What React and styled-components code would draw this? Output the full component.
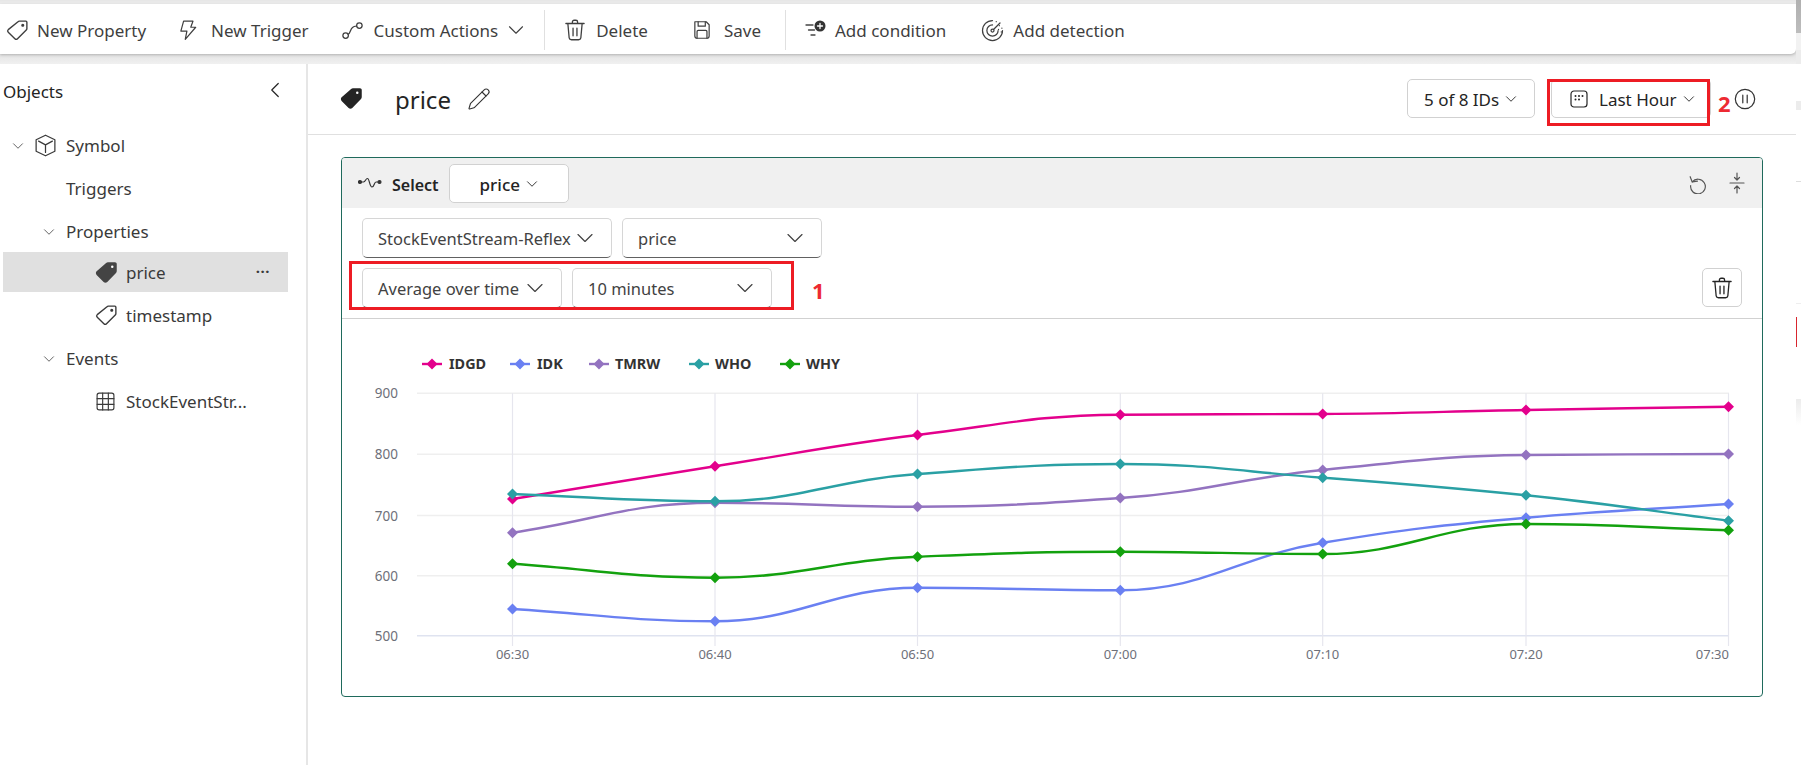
import React from "react";
import styled, { createGlobalStyle } from "styled-components";
import { ChevronDown, ChevronLeft, Pencil } from "lucide-react";

const FONT = `"Noto Sans", "Open Sans", sans-serif`;

const Global = createGlobalStyle`
  html, body { margin: 0; padding: 0; background: #fff; }
  body { font-family: ${FONT}; color: #242424; overflow: hidden; }
  * { box-sizing: border-box; }
`;

const Page = styled.div`
  width: 1801px;
  height: 765px;
  display: grid;
  grid-template-columns: 1796px 5px;
  background: #fff;
`;
const LeftColumn = styled.div`
  display: grid;
  grid-template-rows: 64px 1fr;
  min-height: 0;
`;
const RightStrip = styled.div`
  display: flex;
  flex-direction: column;
`;
const StripPart = styled.div`
  height: ${(p) => p.$h}px;
  background: ${(p) => p.$bg ?? "#fff"};
  border-left: ${(p) => (p.$red ? "1.5px solid #d8262e" : "none")};
`;
const TopBand = styled.div`
  background: linear-gradient(#e6e6e6 0, #eeeeee 4px, #e4e4e4 54px, #f0f0f0 64px);
  padding: 4px 0 10px 0;
  display: flex;
`;
const Toolbar = styled.div`
  flex: 1;
  background: #fff;
  border-radius: 0 0 5px 0;
  box-shadow: 0 1px 3px rgba(0, 0, 0, 0.22);
  display: flex;
  align-items: center;
  padding: 2px 0 0 5px;
  font-size: 17px;
  color: #3f3f3f;
`;
const ToolItem = styled.div`
  display: flex;
  align-items: center;
  gap: ${(p) => p.$gap ?? 9}px;
  margin-right: ${(p) => p.$mr ?? 0}px;
  white-space: nowrap;
`;
const ToolDivider = styled.div`
  width: 1px;
  height: 40px;
  background: #e0e0e0;
  margin-right: ${(p) => p.$mr}px;
`;
const Chevron = styled(ChevronDown)`
  flex: none;
  margin-left: ${(p) => p.$ml ?? 0}px;
`;
const Body = styled.div`
  display: grid;
  grid-template-columns: 308px 1fr;
  min-height: 0;
`;
const Sidebar = styled.aside`
  border-right: 2px solid #e6e6e6;
  padding: 16px 0 0 3px;
  font-size: 17px;
  color: #3a3a3a;
`;
const SideTop = styled.div`
  display: flex;
  justify-content: space-between;
  height: 44px;
  padding-right: 20px;
  align-items: flex-start;
`;
const SideTitle = styled.div`
  font-size: 17px;
  line-height: 24px;
  color: #242424;
`;
const Collapse = styled.div`
  color: #242424;
  margin-top: -3px;
  width: 24px;
  height: 26px;
`;
const TreeRow = styled.div`
  display: flex;
  align-items: center;
  height: ${(p) => p.$h ?? 43}px;
  width: 285px;
  padding-left: ${(p) => p.$indent}px;
  background: ${(p) => (p.$selected ? "#e0e0e0" : "transparent")};
  margin: ${(p) => (p.$selected ? "-1px 0 2px" : "0")};
  white-space: nowrap;
`;
const TreeChevron = styled.span`
  display: inline-flex;
  width: ${(p) => p.$w}px;
  color: #555;
`;
const TreeIcon = styled.span`
  display: inline-flex;
  width: ${(p) => p.$w}px;
`;
const TreeLabel = styled.span`
  flex: 1;
`;
const RowDots = styled.span`
  margin-right: 18px;
  font-size: 15px;
  font-weight: 700;
  letter-spacing: 0.5px;
  line-height: 1;
  margin-top: -2px;
`;
const Main = styled.main`
  display: flex;
  flex-direction: column;
  min-width: 0;
`;
const Header = styled.header`
  height: 71px;
  border-bottom: 1px solid #e0e0e0;
  display: flex;
  align-items: center;
  padding: 0 0 1px 31px;
`;
const HeaderTitle = styled.h1`
  font-weight: 400;
  font-size: 24px;
  margin: 2px 16px 0 31px;
  color: #242424;
`;
const Spacer = styled.div`
  flex: 1;
`;
const HeaderButton = styled.div`
  height: 39px;
  width: ${(p) => p.$w}px;
  margin-left: ${(p) => p.$ml ?? 0}px;
  border: 1px solid #d1d1d1;
  border-radius: 5px;
  display: flex;
  align-items: center;
  padding-left: ${(p) => p.$pl}px;
  padding-top: 1px;
  font-size: 17px;
  color: #242424;
  gap: ${(p) => p.$gap}px;
  white-space: nowrap;
`;
const Annotated = styled.div`
  position: relative;
  display: flex;
  align-items: center;
`;
const RedBox = styled.div`
  position: absolute;
  left: ${(p) => p.$l}px;
  top: ${(p) => p.$t}px;
  width: ${(p) => p.$w}px;
  height: ${(p) => p.$h}px;
  border: 3.5px solid #ed1c24;
  pointer-events: none;
`;
const RedNum = styled.span`
  position: absolute;
  left: ${(p) => p.$l}px;
  top: ${(p) => p.$t}px;
  color: #ed2a32;
  font-weight: 700;
  font-size: 22px;
  line-height: 24px;
`;
const PauseWrap = styled.div`
  display: flex;
  margin: 0 40px 0 23px;
  color: #333;
`;
const Content = styled.div`
  padding: 22px 33px 0 33px;
`;
const Card = styled.section`
  height: 540px;
  border: 1px solid #1f6a5c;
  border-radius: 4px;
  overflow: hidden;
  position: relative;
`;
const CardHeader = styled.div`
  height: 50px;
  background: #f0f0f0;
  display: flex;
  align-items: center;
  padding: 0 0 0 16px;
`;
const SelectLabel = styled.span`
  font-weight: 600;
  font-size: 16px;
  margin: 3px 10px 0 10px;
`;
const PriceButton = styled.div`
  width: 120px;
  height: 39px;
  background: #fff;
  border: 1px solid #d1d1d1;
  border-radius: 5px;
  display: flex;
  align-items: center;
  padding-left: 30px;
  padding-top: 2px;
  gap: 3px;
  font-size: 17px;
  font-weight: 500;
`;
const HeaderTools = styled.div`
  margin-left: auto;
  display: flex;
  gap: 21px;
  padding-right: 17px;
  align-items: center;
  color: #555;
`;
const Filters = styled.div`
  height: 111px;
  border-bottom: 1px solid #d1d1d1;
  padding: 10px 0 0 20px;
  position: relative;
`;
const FilterRow = styled.div`
  display: flex;
  gap: 10px;
  margin-bottom: 10px;
`;
const Dropdown = styled.div`
  width: ${(p) => p.$w}px;
  height: 40px;
  background: #fff;
  border: 1px solid #d6d6d6;
  border-bottom-color: #616161;
  border-radius: 5px;
  display: flex;
  align-items: center;
  justify-content: space-between;
  padding: 0 12px 0 ${(p) => p.$pl ?? 15}px;
  font-size: 16.5px;
  color: #424242;
  white-space: nowrap;
`;
const TrashButton = styled.div`
  position: absolute;
  right: 20px;
  top: 60px;
  width: 40px;
  height: 39px;
  border: 1px solid #d1d1d1;
  border-radius: 5px;
  display: flex;
  align-items: center;
  justify-content: center;
`;
const ChartWrap = styled.div`
  display: block;
`;

const Stroke = ({ s = 20, children, w = 1.1, vb = 20 }) => (
  <svg width={s} height={s} viewBox={`0 0 ${vb} ${vb}`} fill="none" stroke="currentColor" strokeWidth={w} strokeLinecap="round" strokeLinejoin="round" style={{ flex: "none" }}>
    {children}
  </svg>
);

const TagOutline = ({ s = 25 }) => (
  <Stroke s={s}>
    <path d="M11.5 2.5h5.2a.8.8 0 0 1 .8.8v5.2a1.6 1.6 0 0 1-.5 1.1l-7 7a1.5 1.5 0 0 1-2.1 0L2.6 11.4a1.5 1.5 0 0 1 0-2.1l7.8-6.3a1.6 1.6 0 0 1 1.1-.5Z" />
    <circle cx="14.2" cy="5.8" r=".7" fill="currentColor" />
  </Stroke>
);
const TagFilled = ({ s = 25, color = "#242424" }) => (
  <svg width={s} height={s} viewBox="0 0 20 20" style={{ flex: "none" }}>
    <path fill={color} d="M11.2 1.8h5.6c.8 0 1.4.6 1.4 1.4v5.6c0 .6-.2 1.1-.6 1.5l-7 7.2c-.8.8-2.1.8-2.9 0l-5.6-5.6c-.8-.8-.8-2.1 0-2.9l7.6-6.6c.4-.4.9-.6 1.5-.6Z" />
    <circle cx="14.6" cy="5.4" r="1" fill="#fff" />
  </svg>
);
const Bolt = () => (
  <Stroke s={22}><path d="M6 2h8.5l-2 5.5H17L7.5 18.5l1.5-7.5H3.5L6 2Z" /></Stroke>
);
const Nodes = () => (
  <Stroke s={25} w={1}><circle cx="4.5" cy="14" r="2.2" /><circle cx="15.5" cy="6" r="2.2" /><path d="M6.5 13c2-.6 1.5-4 3.5-5.5.8-.6 2-.9 3.3-1.1" /></Stroke>
);
const Trash = ({ s = 26 }) => (
  <Stroke s={s} w={1}>
    <path d="M3 5h14M8 5V3.8A1.3 1.3 0 0 1 9.3 2.5h1.4A1.3 1.3 0 0 1 12 3.8V5M4.5 5l1 11a1.8 1.8 0 0 0 1.8 1.5h5.4a1.8 1.8 0 0 0 1.8-1.5l1-11M8.5 8.5v6M11.5 8.5v6" />
  </Stroke>
);
const Save = () => (
  <Stroke s={22}>
    <path d="M3.5 2.5h10.3l2.7 2.7v10.3a2 2 0 0 1-2 2h-9a2 2 0 0 1-2-2Z" />
    <path d="M6.5 2.5v4h6.5v-4M5.5 17.5v-6.2a1 1 0 0 1 1-1h7a1 1 0 0 1 1 1v6.2" />
  </Stroke>
);
const Condition = () => (
  <svg width="22" height="20" viewBox="0 0 22 20" fill="none" stroke="#444" strokeWidth="1.3" strokeLinecap="round" style={{ flex: "none" }}>
    <path d="M1 5h7M3.5 10h6M6 15h4" />
    <circle cx="15" cy="6" r="5.5" fill="#333" stroke="none" />
    <path d="M15 3.5v5M12.5 6h5" stroke="#fff" />
  </svg>
);
const Detection = () => (
  <Stroke s={25} w={1}>
    <path d="M10 2a8 8 0 1 0 8 8" />
    <path d="M10 5.5a4.5 4.5 0 1 0 4.5 4.5" />
    <circle cx="10" cy="10" r="1.2" />
    <path d="M11 9l5-5" />
    <path d="M13 2.8v.1M15.5 6v.1M17.5 8v.1M14.8 9v.1M17 11v.1" strokeDasharray="1 1" />
  </Stroke>
);
const Cube = () => (
  <Stroke s={25} w={1}>
    <path d="M10 1.8 17.5 5.4v9.2L10 18.2 2.5 14.6V5.4Z" />
    <path d="M4.5 6.5 10 9.5l5.5-3M10 9.5v6" />
  </Stroke>
);
const TableIcon = () => (
  <Stroke s={21}>
    <rect x="2" y="2" width="16" height="16" rx="2" />
    <path d="M2 7.3h16M2 12.7h16M7.3 2v16M12.7 2v16" />
  </Stroke>
);
const Wave = () => (
  <svg width="24" height="12" viewBox="0 0 24 12" fill="none" stroke="#333" strokeWidth="1.2" style={{ flex: "none" }}>
    <path d="M2 5h3.5c2 0 2-3.5 4-3.5s2 8.5 4.5 8.5 2-5 4-5h4" />
    <circle cx="2" cy="5" r="1.5" fill="#333" />
    <circle cx="21.5" cy="5" r="1.5" fill="#333" />
  </svg>
);
const Undo = () => (
  <Stroke s={21}>
    <path d="M5 8.5A7 7 0 1 1 3.5 12" />
    <path d="M3 3.5 5 8.5l5-.8" />
  </Stroke>
);
const Compress = () => (
  <svg width="16" height="22" viewBox="0 0 16 22" fill="none" stroke="#555" strokeWidth="1.2" strokeLinecap="round" strokeLinejoin="round">
    <path d="M1 11h14M8 1v6.5M5.5 5.5 8 8l2.5-2.5M8 21v-6.5M5.5 16.5 8 14l2.5 2.5" />
  </svg>
);
const Calendar = () => (
  <svg width="18" height="18" viewBox="0 0 18 18" fill="none" style={{ flex: "none" }}>
    <rect x="1" y="1" width="16" height="16" rx="3" stroke="#242424" strokeWidth="1.2" />
    {[[5.5, 6], [9, 6], [12.5, 6], [5.5, 9.5], [9, 9.5]].map(([x, y]) => (
      <circle key={`${x}-${y}`} cx={x} cy={y} r="1" fill="#242424" />
    ))}
  </svg>
);
const Pause = () => (
  <Stroke s={22}>
    <circle cx="10" cy="10" r="8.8" />
    <path d="M8 6.5v7M12 6.5v7" />
  </Stroke>
);

const X = [512.5, 715, 917.5, 1120.3, 1322.7, 1526, 1728.5];
const SERIES = [
  { name: "IDGD", color: "#e3008c", lx: 422, tx: 449, y: [499, 466.3, 435, 414.7, 414, 410, 406.7] },
  { name: "IDK", color: "#6a80f2", lx: 510, tx: 537, y: [609, 621.3, 587.7, 590.3, 542.7, 517.7, 504] },
  { name: "TMRW", color: "#9373c0", lx: 589, tx: 615, y: [532.7, 502.7, 506.7, 498, 470, 455, 454] },
  { name: "WHO", color: "#2aa0a4", lx: 689, tx: 715, y: [494, 501.3, 474, 464, 477.7, 495.3, 520.7] },
  { name: "WHY", color: "#13a10e", lx: 780, tx: 806, y: [563.7, 577.7, 556.7, 551.7, 554, 524, 530.3] },
];
const GRID_Y = [
  [900, 393.3],
  [800, 454.3],
  [700, 515.5],
  [600, 575.7],
  [500, 635.7],
];
const XLABELS = ["06:30", "06:40", "06:50", "07:00", "07:10", "07:20", "07:30"];
/* chart svg origin in page coordinates */
const OX = 342;
const OY = 319;

function smoothPath(ys) {
  const n = ys.length;
  const slopes = [];
  for (let i = 0; i < n - 1; i++) slopes.push((ys[i + 1] - ys[i]) / (X[i + 1] - X[i]));
  const t = ys.map((_, i) => {
    if (i === 0) return slopes[0];
    if (i === n - 1) return slopes[n - 2];
    const a = slopes[i - 1];
    const b = slopes[i];
    if (a * b <= 0) return 0;
    return (2 * a * b) / (a + b);
  });
  let d = `M${X[0] - OX} ${ys[0] - OY}`;
  for (let i = 0; i < n - 1; i++) {
    const dx = (X[i + 1] - X[i]) * 0.42;
    d += `C${X[i] + dx - OX} ${ys[i] + t[i] * dx - OY} ${X[i + 1] - dx - OX} ${ys[i + 1] - t[i + 1] * dx - OY} ${X[i + 1] - OX} ${ys[i + 1] - OY}`;
  }
  return d;
}

const Chart = () => (
  <svg width="1420" height="378" viewBox="0 0 1420 378" style={{ display: "block" }} fontFamily={FONT}>
    {GRID_Y.map(([label, y]) => (
      <g key={label}>
        <line x1={417 - OX} x2={1729 - OX} y1={y - OY} y2={y - OY} stroke={label === 500 ? "#dfe3f0" : "#efefef"} strokeWidth="1.5" />
        <text x={398 - OX} y={y - OY + 5} textAnchor="end" fontSize="13.5" fill="#6e7079">{label}</text>
      </g>
    ))}
    {X.map((x, i) => (
      <g key={x}>
        <line x1={x - OX} x2={x - OX} y1={393.3 - OY} y2={646 - OY} stroke="#e6e6ee" strokeWidth="1.2" />
        <text
          x={(i === 6 ? 1729 : x) - OX}
          y={659 - OY}
          textAnchor={i === 6 ? "end" : "middle"}
          fontSize="13"
          fill="#6e7079"
        >
          {XLABELS[i]}
        </text>
      </g>
    ))}
    {SERIES.map((s) => (
      <g key={s.name}>
        <line x1={s.lx - OX} x2={s.lx + 20 - OX} y1={364 - OY} y2={364 - OY} stroke={s.color} strokeWidth="2.4" />
        <path d={`M${s.lx + 10 - OX} ${358.5 - OY}l5.5 5.5-5.5 5.5-5.5-5.5Z`} fill={s.color} />
        <text x={s.tx - OX} y={369 - OY} fontSize="14.4" fontWeight="700" fill="#333">{s.name}</text>
      </g>
    ))}
    {SERIES.map((s) => (
      <g key={s.name}>
        <path d={smoothPath(s.y)} fill="none" stroke={s.color} strokeWidth="2.4" />
        {s.y.map((y, i) => (
          <path key={i} d={`M${X[i] - OX} ${y - 5.5 - OY}l5.5 5.5-5.5 5.5-5.5-5.5Z`} fill={s.color} />
        ))}
      </g>
    ))}
  </svg>
);

export default function App() {
  return (
    <Page>
      <Global />
      <LeftColumn>
        <TopBand>
          <Toolbar>
            <ToolItem $mr={31} $gap={7}><TagOutline s={25} />New Property</ToolItem>
            <ToolItem $mr={31} $gap={12}><Bolt />New Trigger</ToolItem>
            <ToolItem $mr={15} $gap={9}><Nodes />Custom Actions<Chevron size={26} strokeWidth={1} $ml={-4} /></ToolItem>
            <ToolDivider $mr={17} />
            <ToolItem $mr={43} $gap={8}><Trash s={26} />Delete</ToolItem>
            <ToolItem $mr={24} $gap={11}><Save />Save</ToolItem>
            <ToolDivider $mr={19} />
            <ToolItem $mr={34} $gap={8}><Condition />Add condition</ToolItem>
            <ToolItem $gap={8}><Detection />Add detection</ToolItem>
          </Toolbar>
        </TopBand>
        <Body>
          <Sidebar>
            <SideTop>
              <SideTitle>Objects</SideTitle>
              <Collapse><ChevronLeft size={26} strokeWidth={1.1} /></Collapse>
            </SideTop>
            <TreeRow $indent={6}>
              <TreeChevron $w={24}><ChevronDown size={18} strokeWidth={1.2} /></TreeChevron>
              <TreeIcon $w={33}><Cube /></TreeIcon>
              <TreeLabel>Symbol</TreeLabel>
            </TreeRow>
            <TreeRow $indent={63}><TreeLabel>Triggers</TreeLabel></TreeRow>
            <TreeRow $indent={37}>
              <TreeChevron $w={26}><ChevronDown size={18} strokeWidth={1.2} /></TreeChevron>
              <TreeLabel>Properties</TreeLabel>
            </TreeRow>
            <TreeRow $indent={91} $selected $h={40}>
              <TreeIcon $w={32}><TagFilled s={25} color="#444" /></TreeIcon>
              <TreeLabel>price</TreeLabel>
              <RowDots>···</RowDots>
            </TreeRow>
            <TreeRow $indent={91}>
              <TreeIcon $w={32}><TagOutline s={25} /></TreeIcon>
              <TreeLabel>timestamp</TreeLabel>
            </TreeRow>
            <TreeRow $indent={37}>
              <TreeChevron $w={26}><ChevronDown size={18} strokeWidth={1.2} /></TreeChevron>
              <TreeLabel>Events</TreeLabel>
            </TreeRow>
            <TreeRow $indent={92}>
              <TreeIcon $w={31}><TableIcon /></TreeIcon>
              <TreeLabel>StockEventStr...</TreeLabel>
            </TreeRow>
          </Sidebar>
          <Main>
            <Header>
              <TagFilled s={25} />
              <HeaderTitle>price</HeaderTitle>
              <Pencil size={24} strokeWidth={1.1} color="#333" />
              <Spacer />
              <HeaderButton $w={128} $pl={16} $gap={3}>5 of 8 IDs<Chevron size={18} strokeWidth={1.2} /></HeaderButton>
              <Annotated>
                <HeaderButton $w={160} $ml={16} $pl={18} $gap={11}>
                  <Calendar />
                  <span>Last Hour</span>
                  <Chevron size={18} strokeWidth={1.2} $ml={-8} />
                </HeaderButton>
                <RedBox $l={12} $t={0} $w={163} $h={47} />
                <RedNum $l={183} $t={12}>2</RedNum>
              </Annotated>
              <PauseWrap><Pause /></PauseWrap>
            </Header>
            <Content>
              <Card>
                <CardHeader>
                  <Wave />
                  <SelectLabel>Select</SelectLabel>
                  <PriceButton>price<Chevron size={18} strokeWidth={1.2} /></PriceButton>
                  <HeaderTools><Undo /><Compress /></HeaderTools>
                </CardHeader>
                <Filters>
                  <FilterRow>
                    <Dropdown $w={250}>StockEventStream-Reflex<Chevron size={28} strokeWidth={1} /></Dropdown>
                    <Dropdown $w={200}>price<Chevron size={28} strokeWidth={1} /></Dropdown>
                  </FilterRow>
                  <FilterRow>
                    <Dropdown $w={200}>Average over time<Chevron size={28} strokeWidth={1} /></Dropdown>
                    <Dropdown $w={200}>10 minutes<Chevron size={28} strokeWidth={1} /></Dropdown>
                  </FilterRow>
                  <RedBox $l={7} $t={53} $w={445} $h={49} />
                  <RedNum $l={470} $t={70}>1</RedNum>
                  <TrashButton><Trash s={26} /></TrashButton>
                </Filters>
                <ChartWrap><Chart /></ChartWrap>
              </Card>
            </Content>
          </Main>
        </Body>
      </LeftColumn>
      <RightStrip>
        <StripPart $h={33} $bg="linear-gradient(#b0b0b0, #bdbdbd)" />
        <StripPart $h={17} $bg="#f2f2f2" />
        <StripPart $h={14} $bg="#ececec" />
        <StripPart $h={37} />
        <StripPart $h={9} $bg="#ececec" />
        <StripPart $h={71} />
        <StripPart $h={1} $bg="#dddddd" />
        <StripPart $h={121} />
        <StripPart $h={1} $bg="#eeeeee" />
        <StripPart $h={13} />
        <StripPart $h={30} $red />
        <StripPart $h={52} />
        <StripPart $h={26} $bg="linear-gradient(#ececec, #fff)" />
      </RightStrip>
    </Page>
  );
}
